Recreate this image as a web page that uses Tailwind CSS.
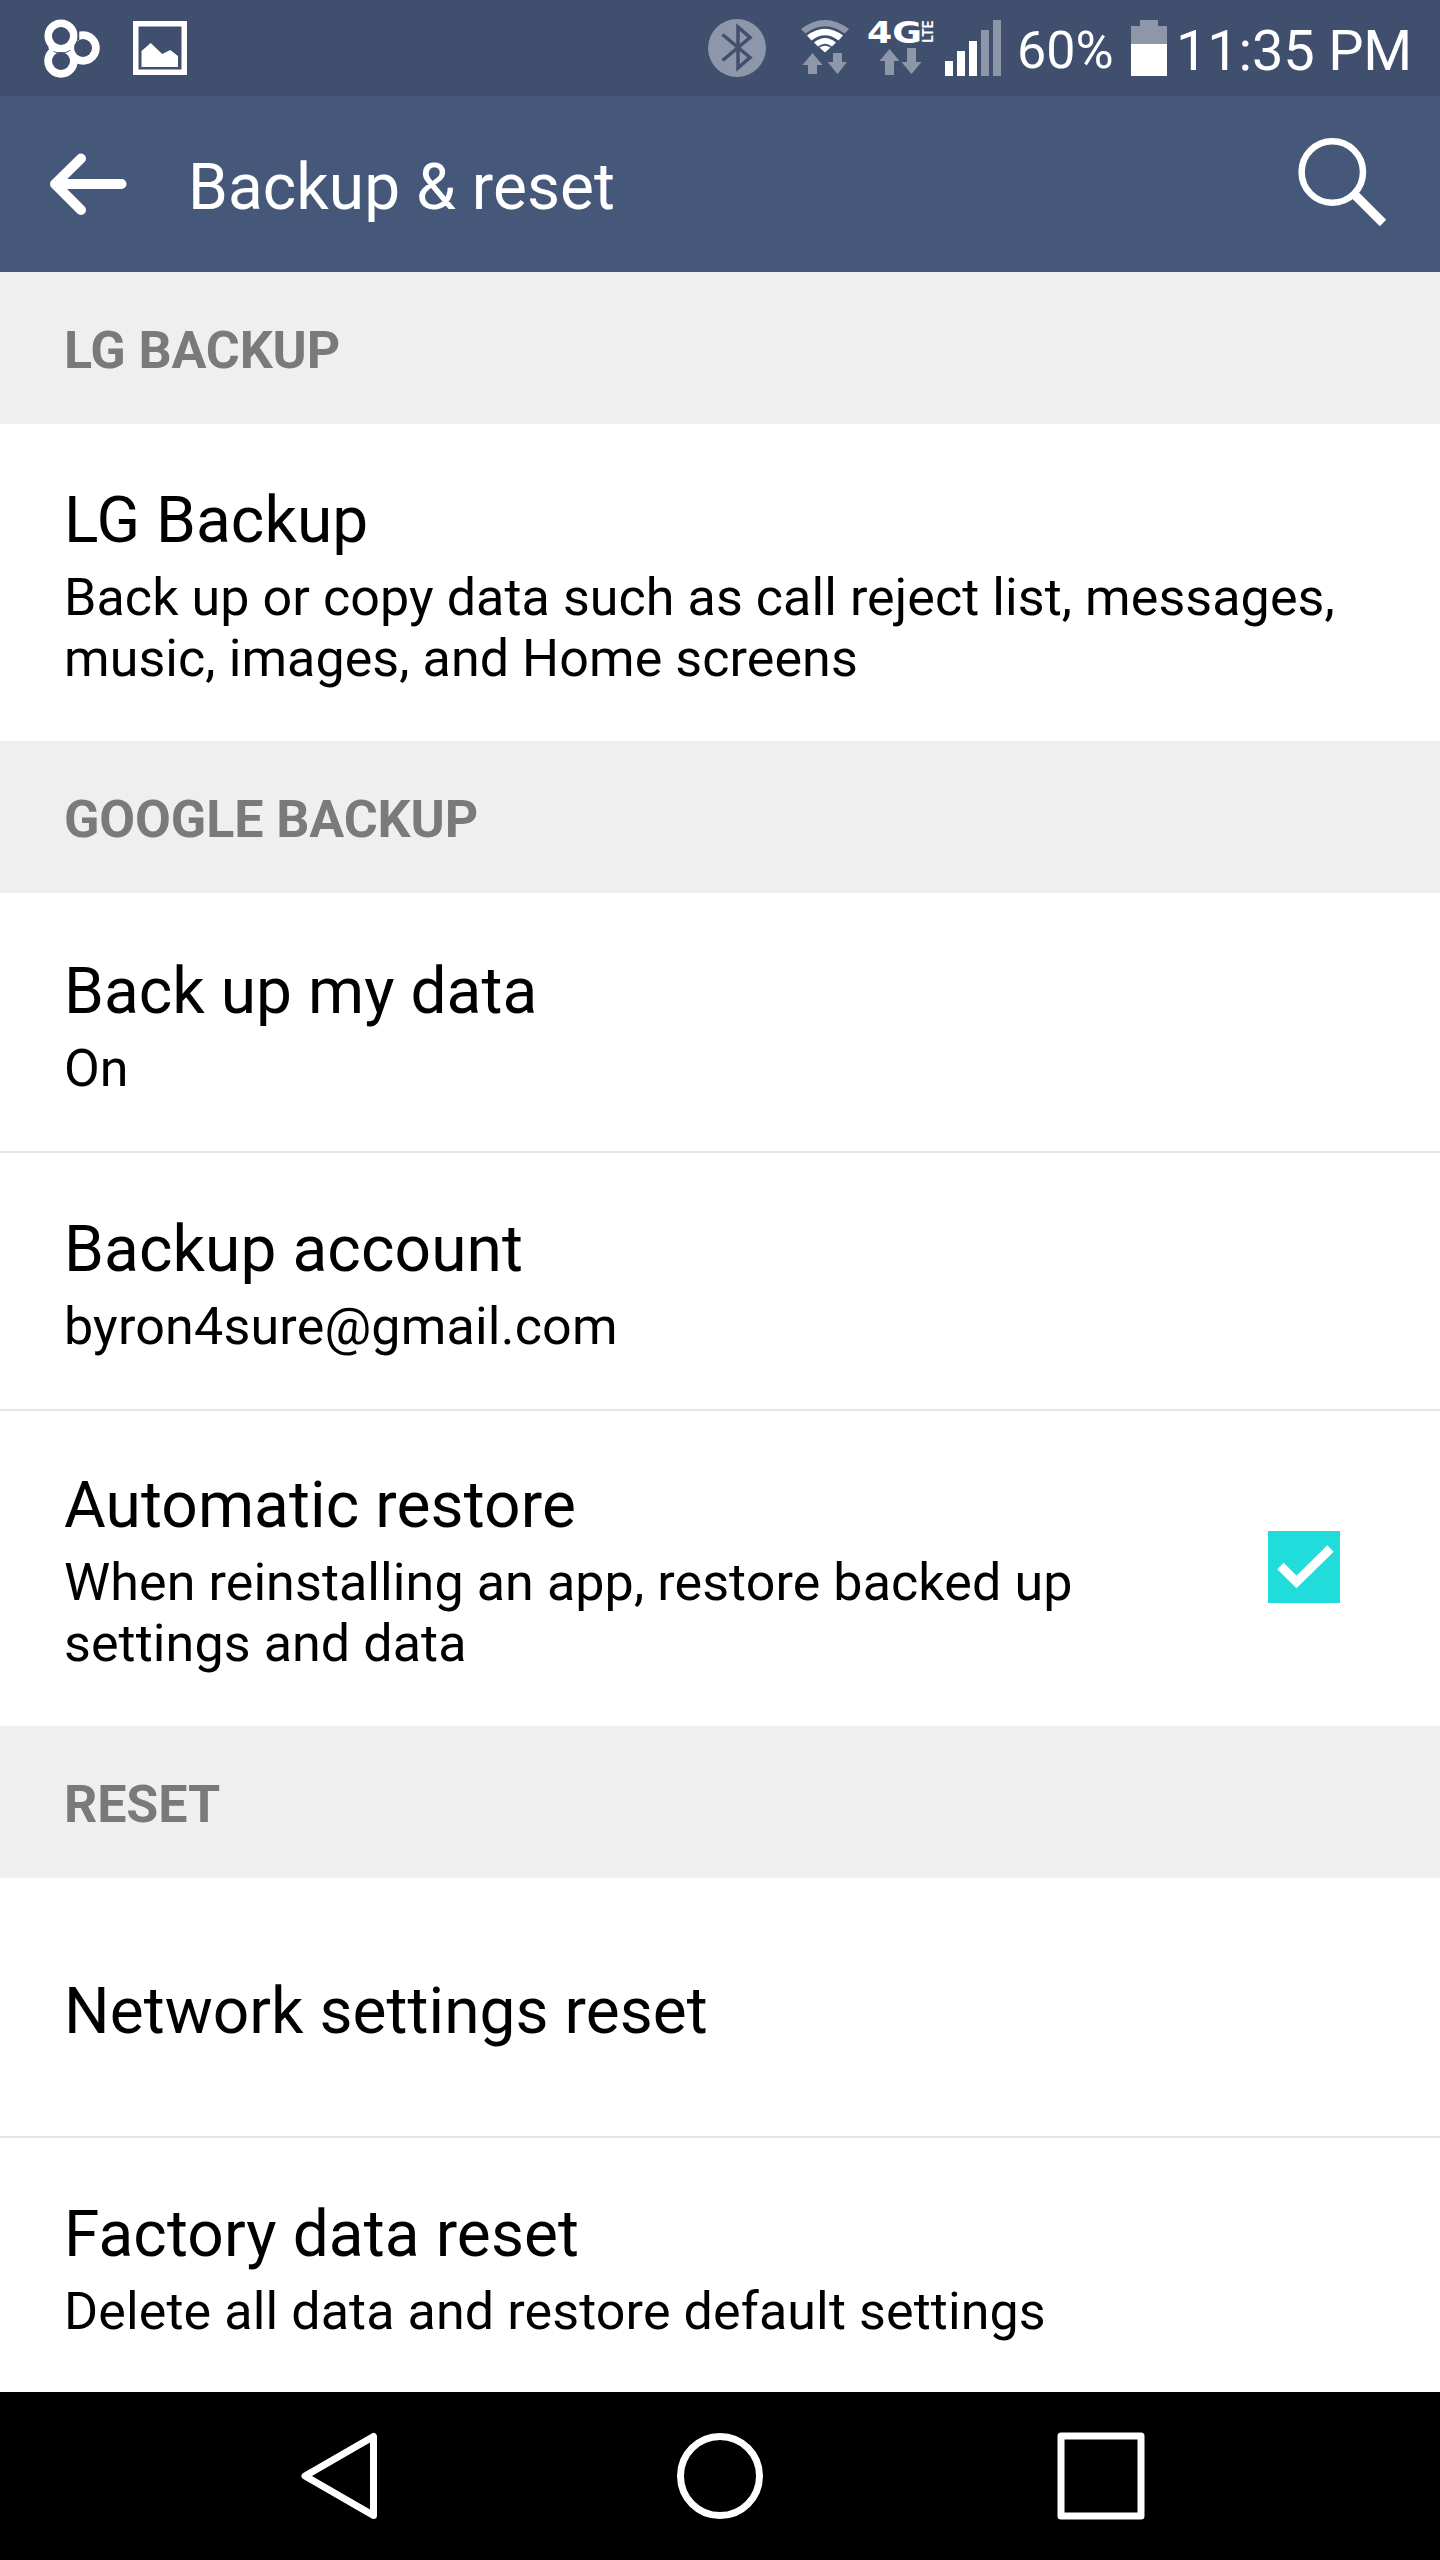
<!DOCTYPE html>
<html lang="en">
<head>
  <meta charset="UTF-8">
  <meta name="viewport" content="width=device-width, initial-scale=1.0">
  <title>Backup &amp; reset</title>
  <script src="https://cdn.jsdelivr.net/npm/@tailwindcss/browser@4"></script>
</head>
<body class="bg-white text-black font-['Roboto',sans-serif]">
  <div class="w-[1440px] h-[2560px] flex flex-col overflow-hidden">

    <!-- status bar -->
    <div class="h-24 shrink-0 bg-[#414f6e] flex items-start justify-between text-white">
      <svg class="w-60 h-24" viewBox="0 0 240 96" fill="none">
        <g stroke="#fff" stroke-width="8.5">
          <circle cx="61" cy="61" r="12.5"/>
          <circle cx="83" cy="48" r="12.5"/>
        </g>
        <circle cx="61" cy="36" r="17.5" fill="#414f6e"/>
        <circle cx="61" cy="36" r="12.5" stroke="#fff" stroke-width="8"/>
        <path d="M50 50C56 45 66 48 70 43L75 52C77 58 80 60 84 60" stroke="#fff" stroke-width="6"/>
        <circle cx="61" cy="61" r="9" fill="#414f6e"/>
        <circle cx="61" cy="36" r="9" fill="#414f6e"/>
        <circle cx="83" cy="48" r="9" fill="#414f6e"/>
        <path d="M78.500 30V40" stroke="#414f6e" stroke-width="1.500"/>
        <path d="M133 21h54v54h-54zM138.500 26.500v43h43v-43z" fill="#fff" fill-rule="evenodd"/>
        <path d="M141.500 51l9.200-8 11.500 11 8-4 7.800 6v11h-36.500z" fill="#fff"/>
      </svg>
      <div class="flex items-start h-24">
        <svg class="w-[330px] h-24" viewBox="0 0 330 96" fill="none">
          <circle cx="47" cy="48" r="29" fill="#8e96a9"/>
          <path d="M32.500 34.500L60 57.500L48 68V27L60 37.500L32.500 60.500" stroke="#414f6e" stroke-width="3.500"/>
          <!-- wifi -->
          <path d="M111 29Q135 11 159 29L154.500 33.500Q135 19 115.500 33.500Z" fill="#8e96a9"/>
          <path d="M117 35.500Q135 22 153 35.500L148.500 40.500Q135 30 121.500 40.500Z" fill="#fff"/>
          <path d="M124 42.500Q135 33.500 146 42.500L142 46.500Q135 41 128 46.500Z" fill="#fff"/>
          <path d="M129.500 47.500Q135 44 140.500 47.500L135 52.500Z" fill="#fff"/>
          <g fill="#8e96a9">
            <path d="M122.500 53l10 12h-5.500v9h-9v-9h-5.500z"/>
            <path d="M147.500 74l-10-12h5.500v-9h9v9h5z"/>
            <path d="M199.500 49l10 12h-5.500v14h-9v-14h-5.500z"/>
            <path d="M231.500 62l-10 12-10-12h5.500v-14h9v14z"/>
          </g>
          <text x="177" y="43" textLength="55" lengthAdjust="spacingAndGlyphs" font-family="DejaVu Sans" font-weight="700" font-size="30" fill="#fff">4G</text>
          <text transform="translate(243 42.500) rotate(-90)" textLength="22" lengthAdjust="spacingAndGlyphs" font-family="Roboto" font-weight="700" font-size="14" fill="#fff">LTE</text>
          <path d="M255 61h8v15h-8zM267 51h8v25h-8zM279 41h8v35h-8z" fill="#fff"/>
          <path d="M291 30h8v46h-8zM303 20h8v56h-8z" fill="#8e96a9"/>
        </svg>
        <div class="w-[114px] text-[52px] leading-24 pt-[3px] -ml-[3px]">60%</div>
        <svg class="w-9 h-24" viewBox="0 0 36 96">
          <path d="M9 20h18v6h9v18H0V26h9z" fill="#8e96a9"/>
          <path d="M0 44h36v32H0z" fill="#fff"/>
        </svg>
        <div class="w-[273px] text-[56px] leading-24 pt-[3px] pl-[9px] whitespace-nowrap tracking-[-0.2px]">11:35 PM</div>
      </div>
    </div>

    <!-- title bar -->
    <div class="h-44 shrink-0 bg-[#465879] flex items-center justify-between text-white">
      <div class="flex items-center">
        <svg class="w-[188px] h-44" viewBox="0 0 188 176" fill="none" stroke="#fff" stroke-width="10" stroke-linecap="round" stroke-linejoin="round">
          <path d="M121.500 88H58M81 62.500L55 88L81 114"/>
        </svg>
        <h1 class="text-[64px] leading-[75px] pt-[7px] tracking-[0.05px]">Backup &amp; reset</h1>
      </div>
      <svg class="w-50 h-44" viewBox="0 0 200 176" fill="none" stroke="#fff">
        <circle cx="92.300" cy="76" r="30.700" stroke-width="6.500"/>
        <path d="M115 99L143 127" stroke-width="9"/>
      </svg>
    </div>

    <h2 class="h-38 shrink-0 bg-[#efefef] px-16 pt-1.5 flex items-center text-[52px] tracking-[-0.15px] font-bold text-[#7a7a7a]">LG BACKUP</h2>

    <div class="h-[317px] shrink-0 px-16 pt-[59px]">
      <div class="text-[64px] leading-[75px] tracking-[0.05px]">LG Backup</div>
      <div class="mt-[9px] text-[52px] leading-[61px] tracking-[0.08px]">Back up or copy data such as call reject list, messages,<br>music, images, and Home screens</div>
    </div>

    <h2 class="h-38 shrink-0 bg-[#efefef] px-16 pt-1.5 flex items-center text-[52px] tracking-[-0.1px] font-bold text-[#7a7a7a]">GOOGLE BACKUP</h2>

    <div class="h-[260px] shrink-0 px-16 pt-[61px] border-b-2 border-[#e4e4e4]">
      <div class="text-[64px] leading-[75px] tracking-[0.05px]">Back up my data</div>
      <div class="mt-[9px] text-[52px] leading-[61px] tracking-[0.08px]">On</div>
    </div>

    <div class="h-[258px] shrink-0 px-16 pt-[59px] border-b-2 border-[#e4e4e4]">
      <div class="text-[64px] leading-[75px] tracking-[0.1px]">Backup account</div>
      <div class="mt-[9px] text-[52px] leading-[61px] tracking-[0.2px]">byron4sure@gmail.com</div>
    </div>

    <div class="h-[315px] shrink-0 pl-16 pr-[100px] flex items-start justify-between">
      <div class="pt-[57px]">
        <div class="text-[64px] leading-[75px] tracking-[0.1px]">Automatic restore</div>
        <div class="mt-[9px] text-[52px] leading-[61px] tracking-[0.1px]">When reinstalling an app, restore backed up<br>settings and data</div>
      </div>
      <div class="mt-30 w-18 h-18 bg-[#20dddc]">
        <svg class="w-18 h-18" viewBox="0 0 72 72" fill="none" stroke="#fff" stroke-width="9">
          <path d="M12.500 35L28.500 51L62.500 17.500"/>
        </svg>
      </div>
    </div>

    <h2 class="h-38 shrink-0 bg-[#efefef] px-16 pt-1.5 flex items-center text-[52px] tracking-[-0.1px] font-bold text-[#7a7a7a]">RESET</h2>

    <div class="h-[260px] shrink-0 px-16 pt-[9px] flex items-center border-b-2 border-[#e4e4e4]">
      <div class="text-[64px] leading-[75px] tracking-[0.05px]">Network settings reset</div>
    </div>

    <div class="h-[254px] shrink-0 px-16 pt-[59px]">
      <div class="text-[64px] leading-[75px] tracking-[0.1px]">Factory data reset</div>
      <div class="mt-[9px] text-[52px] leading-[61px] tracking-[0.12px]">Delete all data and restore default settings</div>
    </div>

    <!-- navigation bar -->
    <div class="h-42 shrink-0 bg-black flex justify-center">
      <svg class="w-[920px] h-42" viewBox="260 0 920 168" fill="none" stroke="#fff" stroke-width="7" stroke-linejoin="round">
        <path d="M373.500 44.500V123.500L305 84Z"/>
        <circle cx="720" cy="84" r="39.500"/>
        <rect x="1061" y="44" width="80" height="80"/>
      </svg>
    </div>
  </div>
</body>
</html>
